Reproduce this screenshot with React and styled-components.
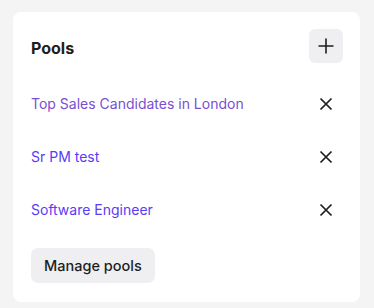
import React from 'react'
import styled, { createGlobalStyle } from 'styled-components'

const GlobalStyle = createGlobalStyle`
  body {
    margin: 0;
    background: #f4f4f4;
    font-family: Inter, 'Noto Sans', sans-serif;
  }
`

const Page = styled.div`
  padding: 12px 14px 6px 13px;
`

const Card = styled.div`
  background: #fff;
  border-radius: 8px;
  padding: 17px 17px 19px 18px;
  display: flex;
  flex-direction: column;
`

const Header = styled.div`
  display: flex;
  align-items: center;
  justify-content: space-between;
  margin-bottom: 14px;
`

const Title = styled.h2`
  margin: 3px 0 0;
  font-size: 16px;
  font-weight: 700;
  color: #1d1d1f;
`

const IconButton = styled.button`
  width: 34px;
  height: 34px;
  border: none;
  border-radius: 6px;
  background: ${p => (p.$filled ? '#efeff1' : 'transparent')};
  display: flex;
  align-items: center;
  justify-content: center;
  padding: 0;
  color: #1d1d1f;
  cursor: pointer;
`

const Row = styled.div`
  height: 53px;
  display: flex;
  align-items: center;
  justify-content: space-between;
`

const PoolLink = styled.a`
  font-size: 14px;
  color: ${p => (p.$visited ? '#7a4fd2' : '#5a3cf6')};
  text-decoration: none;
`

const ManageButton = styled.button`
  align-self: flex-start;
  margin-top: 12px;
  height: 35px;
  padding: 0 13px;
  border: none;
  border-radius: 7px;
  background: #efeff1;
  font-family: Inter, 'Noto Sans', sans-serif;
  font-size: 14.5px;
  font-weight: 500;
  color: #1d1d1f;
`

const PlusIcon = () => (
  <svg width="18" height="18" viewBox="0 0 18 18" fill="none" stroke="currentColor" strokeWidth="1.6">
    <path d="M9 1.5v15M1.5 9h15" />
  </svg>
)

const CloseIcon = () => (
  <svg width="14" height="14" viewBox="0 0 14 14" fill="none" stroke="currentColor" strokeWidth="1.7">
    <path d="M1.5 1.5l11 11M12.5 1.5l-11 11" />
  </svg>
)

const pools = [
  { name: 'Top Sales Candidates in London', visited: true },
  { name: 'Sr PM test' },
  { name: 'Software Engineer' }
]

export default function App () {
  return (
    <Page>
      <GlobalStyle />
      <Card>
        <Header>
          <Title>Pools</Title>
          <IconButton $filled><PlusIcon /></IconButton>
        </Header>
        {pools.map(pool => (
          <Row key={pool.name}>
            <PoolLink href="#" $visited={pool.visited}>{pool.name}</PoolLink>
            <IconButton><CloseIcon /></IconButton>
          </Row>
        ))}
        <ManageButton>Manage pools</ManageButton>
      </Card>
    </Page>
  )
}
